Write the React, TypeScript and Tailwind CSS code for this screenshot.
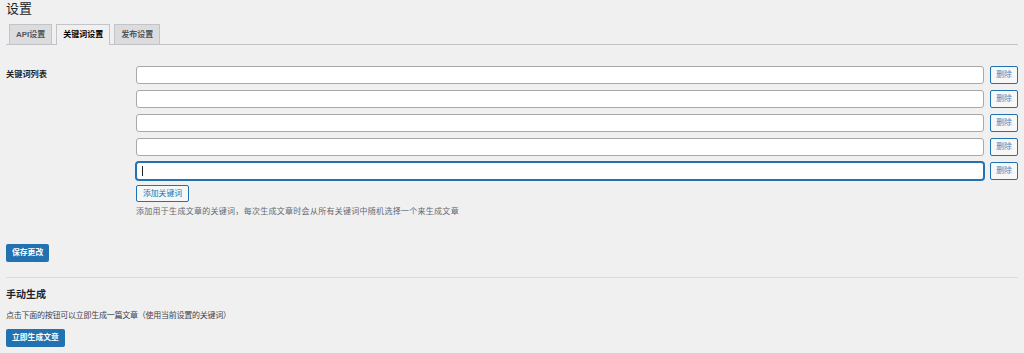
import React from "react"

const tabs = [
  { label: "API设置", active: false },
  { label: "关键词设置", active: true },
  { label: "发布设置", active: false },
]

function KeywordRow({ focused }: { focused?: boolean }) {
  return (
    <div className="flex items-center gap-[6px]">
      <div
        className={
          focused
            ? "relative h-[18px] flex-1 rounded-[3px] border border-[#2271b1] bg-white shadow-[0_0_0_1px_#2271b1]"
            : "relative h-[18px] flex-1 rounded-[3px] border border-[#a7aaad] bg-white"
        }
      >
        {focused && <span className="absolute left-[5px] top-[3px] h-[10px] w-px bg-[#1d2327]" />}
      </div>
      <button className="h-[18px] w-[28px] rounded-[2px] border border-[#2271b1] bg-[#f6f7f7] text-[7.8px] leading-none text-[#4f86bd]">
        删除
      </button>
    </div>
  )
}

export default function App() {
  return (
    <div
      className="min-h-[353px] w-full bg-[#f0f0f1] px-[6px] text-[#1d2327]"
      style={{ fontFamily: '"Liberation Sans", "Noto Sans CJK SC", sans-serif' }}
    >
      <h1 className="text-[13px] font-normal leading-[17px]">设置</h1>

      <nav className="mt-[7px] flex gap-[4px] border-b border-[#c3c4c7] pl-[3px]">
        {tabs.map((tab) => (
          <div
            key={tab.label}
            className={
              tab.active
                ? "-mb-px flex h-[21px] items-center border border-b-0 border-[#c3c4c7] bg-[#f0f0f1] px-[6px] text-[8px] font-semibold text-black"
                : "flex h-[20px] items-center border border-b-0 border-[#c3c4c7] bg-[#dcdcde] px-[6px] text-[8px] font-semibold text-[#50575e]"
            }
          >
            {tab.label}
          </div>
        ))}
      </nav>

      <div className="mt-[21px] flex">
        <div className="w-[130px] pt-[4px] text-[8.2px] font-semibold leading-[10px]">关键词列表</div>
        <div className="flex flex-1 flex-col">
          <div className="flex flex-col gap-[6px]">
            <KeywordRow />
            <KeywordRow />
            <KeywordRow />
            <KeywordRow />
            <KeywordRow focused />
          </div>
          <div className="mt-[5px] flex">
            <button className="h-[17px] rounded-[2px] border border-[#2271b1] bg-[#f6f7f7] px-[6px] text-[7.8px] leading-none text-[#2271b1]">
              添加关键词
            </button>
          </div>
          <p className="mt-[4px] text-[8px] leading-[12px] tracking-[0.28px] text-[#646970]">
            添加用于生成文章的关键词，每次生成文章时会从所有关键词中随机选择一个来生成文章
          </p>
        </div>
      </div>

      <button className="mt-[26px] block h-[18px] rounded-[2px] bg-[#2271b1] px-[6px] text-[7.8px] font-semibold leading-none text-white">
        保存更改
      </button>

      <hr className="mt-[15px] border-0 border-t border-[#dcdcde]" />

      <h2 className="mt-[10px] text-[10px] font-bold leading-[14px]">手动生成</h2>
      <p className="mt-[8px] text-[8px] leading-[12px] tracking-[-0.25px] text-[#3c434a]">
        点击下面的按钮可以立即生成一篇文章（使用当前设置的关键词）
      </p>
      <button className="mt-[7px] block h-[18px] rounded-[2px] bg-[#2271b1] px-[6px] text-[7.8px] font-semibold leading-none text-white">
        立即生成文章
      </button>
    </div>
  )
}
